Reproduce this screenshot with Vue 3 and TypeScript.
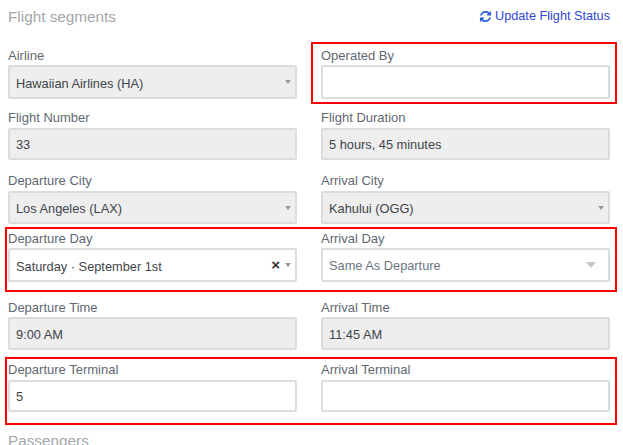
<script setup lang="ts">
interface Field {
  label: string
  value: string
  kind: 'select' | 'input'
  disabled?: boolean
  clear?: boolean
  placeholder?: boolean
}
interface Row {
  cls: string
  fields: Field[]
  mark?: boolean
}
const rows: Row[] = [
  { cls: 'r1', fields: [
    { label: 'Airline', value: 'Hawaiian Airlines (HA)', kind: 'select', disabled: true },
    { label: 'Operated By', value: '', kind: 'input' },
  ] },
  { cls: 'r2', fields: [
    { label: 'Flight Number', value: '33', kind: 'input', disabled: true },
    { label: 'Flight Duration', value: '5 hours, 45 minutes', kind: 'input', disabled: true },
  ] },
  { cls: 'r3', fields: [
    { label: 'Departure City', value: 'Los Angeles (LAX)', kind: 'select', disabled: true },
    { label: 'Arrival City', value: 'Kahului (OGG)', kind: 'select', disabled: true },
  ] },
  { cls: 'r4', mark: true, fields: [
    { label: 'Departure Day', value: 'Saturday · September 1st', kind: 'select', clear: true },
    { label: 'Arrival Day', value: 'Same As Departure', kind: 'select', placeholder: true },
  ] },
  { cls: 'r5', fields: [
    { label: 'Departure Time', value: '9:00 AM', kind: 'input', disabled: true },
    { label: 'Arrival Time', value: '11:45 AM', kind: 'input', disabled: true },
  ] },
  { cls: 'r6', mark: true, fields: [
    { label: 'Departure Terminal', value: '5', kind: 'input' },
    { label: 'Arrival Terminal', value: '', kind: 'input' },
  ] },
]
</script>

<template>
  <div class="page">
    <div class="head">
      <h2 class="title">Flight segments</h2>
      <a class="link">
        <svg class="refresh" viewBox="0 0 1792 1792" aria-hidden="true">
          <path fill="currentColor" d="M1639 1056q0 5-1 7-64 268-268 434.5t-478 166.5q-146 0-282.5-55t-243.5-157l-129 129q-19 19-45 19t-45-19-19-45v-448q0-26 19-45t45-19h448q26 0 45 19t19 45-19 45l-137 137q71 66 161 102t187 36q134 0 250-65t186-179q11-17 53-117 8-23 30-23h192q13 0 22.5 9.5t9.5 22.5zm25-800v448q0 26-19 45t-45 19h-448q-26 0-45-19t-19-45 19-45l138-138q-148-137-349-137-134 0-250 65t-186 179q-11 17-53 117-8 23-30 23h-199q-13 0-22.5-9.5t-9.5-22.5v-7q65-268 270-434.5t480-166.5q146 0 284 55.5t245 156.5l130-129q19-19 45-19t45 19 19 45z" />
        </svg>
        Update Flight Status
      </a>
    </div>

    <div v-for="row in rows" :key="row.cls" class="row" :class="row.cls">
      <span v-if="row.mark" class="mark"></span>
      <div v-for="f in row.fields" :key="f.label" class="field">
        <span v-if="f.label === 'Operated By'" class="mark mark-single"></span>
        <label class="label">{{ f.label }}</label>
        <div class="control" :class="[f.kind, { disabled: f.disabled, placeholder: f.placeholder }]">
          <span class="value">{{ f.value }}</span>
          <span v-if="f.clear" class="clear">×</span>
          <span v-if="f.kind === 'select'" class="caret"></span>
        </div>
      </div>
    </div>

    <h2 class="title next">Passengers</h2>
  </div>
</template>

<style scoped>
.page {
  box-sizing: border-box;
  width: 623px;
  height: 445px;
  overflow: hidden;
  padding: 0 13px 0 8px;
  background: #fff;
  font-family: "Liberation Sans", Arial, sans-serif;
  font-size: 13px;
  color: #5f6872;
}
.head {
  display: flex;
  justify-content: space-between;
  align-items: flex-start;
  height: 48px;
}
.title {
  margin: 7px 0 0;
  font-size: 15.3px;
  line-height: 20px;
  font-weight: 400;
  color: #a3a7ab;
}
.title.next {
  margin-top: 19px;
}
.link {
  display: flex;
  align-items: center;
  gap: 3px;
  margin-top: 8px;
  font-size: 12.7px;
  line-height: 16px;
  color: #2f47d6;
}
.refresh {
  width: 13px;
  height: 13px;
  color: #2a62d8;
}
.row {
  position: relative;
  display: grid;
  grid-template-columns: 289px 289px;
  column-gap: 24px;
}
.field {
  position: relative;
  display: flex;
  flex-direction: column;
}
.label {
  height: 16px;
  line-height: 16px;
  margin-bottom: 1px;
}
.control {
  box-sizing: border-box;
  display: flex;
  align-items: center;
  height: 33px;
  padding: 0 6px;
  border: 2px solid #d9dde0;
  border-radius: 2px;
  background: #fff;
  font-size: 12.8px;
  color: #3f444a;
}
.control.disabled {
  background: #eeeeee;
}
.control.placeholder {
  color: #6b7580;
}
.value {
  flex: 1;
  white-space: nowrap;
}
.control.select .value,
.r5 .value {
  padding-top: 2px;
}
.control.placeholder .value {
  padding-top: 0;
}
.clear {
  font-size: 15px;
  font-weight: 700;
  line-height: 16px;
  color: #333;
  margin-right: 5px;
}
.caret {
  width: 0;
  height: 0;
  margin-right: -2px;
  border-left: 3.5px solid transparent;
  border-right: 3.5px solid transparent;
  border-top: 4px solid #999;
}
.control.placeholder .caret {
  margin-right: 6px;
  border-left-width: 5px;
  border-right-width: 5px;
  border-top: 6px solid #c3c8cc;
}
.r1 .control { height: 34px; }
.r2 { margin-top: 11px; }
.r2 .label { margin-bottom: 2px; }
.r2 .control { height: 32px; }
.r3 { margin-top: 13px; }
.r3 .label { margin-bottom: 2px; }
.r4 { margin-top: 7px; }
.r4 .control { height: 34px; }
.r5 { margin-top: 18px; }
.r6 { margin-top: 12px; }
.r6 .label { margin-bottom: 2px; }
.r6 .control { height: 32px; }
.mark {
  position: absolute;
  box-sizing: border-box;
  border: 2px solid #f00;
  pointer-events: none;
}
.r4 > .mark {
  left: -3px;
  right: -7px;
  top: -4px;
  bottom: -10px;
}
.r6 > .mark {
  left: -3px;
  right: -7px;
  top: -5px;
  bottom: -13px;
}
.mark-single {
  left: -10px;
  right: -7px;
  top: -6px;
  bottom: -5px;
}
</style>

<style>
html, body {
  margin: 0;
  overflow: hidden;
  background: #fff;
}
</style>
